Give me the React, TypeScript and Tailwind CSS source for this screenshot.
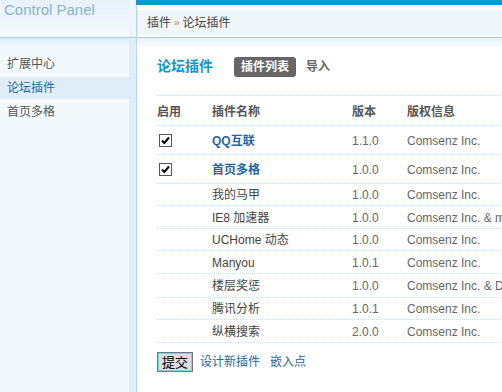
import React from 'react';

const navItems = [
  { label: '扩展中心', active: false },
  { label: '论坛插件', active: true },
  { label: '首页多格', active: false },
];

// row heights include the dotted bottom border
const plugins = [
  { name: 'QQ互联', version: '1.1.0', copyright: 'Comsenz Inc.', enabled: true, h: 'h-[29px]' },
  { name: '首页多格', version: '1.0.0', copyright: 'Comsenz Inc.', enabled: true, h: 'h-[29px]' },
  { name: '我的马甲', version: '1.0.0', copyright: 'Comsenz Inc.', enabled: false, h: 'h-[22px]' },
  { name: 'IE8 加速器', version: '1.0.0', copyright: 'Comsenz Inc. & monkeye', enabled: false, h: 'h-[23px]' },
  { name: 'UCHome 动态', version: '1.0.0', copyright: 'Comsenz Inc.', enabled: false, h: 'h-[22px]' },
  { name: 'Manyou', version: '1.0.1', copyright: 'Comsenz Inc.', enabled: false, h: 'h-[23px]' },
  { name: '楼层奖惩', version: '1.0.0', copyright: 'Comsenz Inc. & Discuz!', enabled: false, h: 'h-[24px]' },
  { name: '腾讯分析', version: '1.0.1', copyright: 'Comsenz Inc.', enabled: false, h: 'h-[22px]' },
  { name: '纵横搜索', version: '2.0.0', copyright: 'Comsenz Inc.', enabled: false, h: 'h-[23px]' },
];

const CheckBox = () => (
  <span className="flex w-[13px] h-[13px] items-center justify-center border border-[#555] bg-white">
    <svg width="11" height="11" viewBox="0 0 11 11">
      <path d="M2 5.5 L4.3 8 L9 2.5" fill="none" stroke="#000" strokeWidth="2" />
    </svg>
  </span>
);

const App = () => {
  return (
    <div
      className="flex w-[502px] h-[392px] overflow-hidden bg-white text-[12px] text-[#333]"
      style={{ fontFamily: '"Liberation Sans", "Noto Sans CJK SC", sans-serif' }}
    >
      {/* left column: logo + side menu */}
      <div className="flex w-[137px] shrink-0 border-r border-[#b9d4e2]">
        <div className="flex flex-col w-[130px]">
          <div className="h-[38px] border-b border-[#a9cddd] bg-gradient-to-b from-[#e6f2f9] to-[#f6fbfd]">
            <div className="pl-[4px] pt-[2px] text-[15px] leading-[15px] text-[#86b5cc]">Control Panel</div>
          </div>
          <div className="flex-1 bg-[#f2f9fd] bg-[linear-gradient(#dcedf6,#f2f9fd_10px)] pt-[15px] flex flex-col gap-[2px]">
            {navItems.map((item) => (
              <div
                key={item.label}
                className={`h-[22px] flex items-center pl-[7px] ${item.active ? 'bg-[#deedf8] text-[#2366a8]' : 'text-[#555]'}`}
              >
                {item.label}
              </div>
            ))}
          </div>
        </div>
        <div className="flex flex-col w-[7px]">
          <div className="h-[38px] border-b border-[#a9cddd] bg-[#eef6fb]" />
          <div className="flex-1 bg-[#deeef8]" />
        </div>
      </div>

      {/* main */}
      <div className="flex-1 flex flex-col min-w-0">
        <div className="h-[38px] border-b border-[#a9cddd] flex flex-col">
          <div className="h-[5px] bg-[#0a9acd] -ml-px" />
          <div className="mt-[5px] h-[25px] bg-[#f0f7fb] border-l border-[#d6e7f1] flex items-center pl-[9px] text-[#444]">
            插件 <span className="mx-[3px] text-[10px] text-[#c08a3a]">»</span>论坛插件
          </div>
        </div>

        <div className="flex-1 bg-[linear-gradient(#e8f3f9,#fff_12px)] pl-[20px]">
          <div className="flex items-center h-[37px] mt-[10px]">
            <span className="text-[14px] font-bold text-[#0a99cc] w-[77px]">论坛插件</span>
            <span className="h-[20px] px-[7px] flex items-center rounded-[3px] bg-[#666] text-white font-bold">插件列表</span>
            <span className="ml-[10px] font-bold text-[#666]">导入</span>
          </div>

          <div className="mt-[10px] w-[400px] border-t border-dotted border-[#cde2ee]">
            <div className="flex items-center h-[30px] pt-[2px] border-b border-dotted border-[#cde2ee] font-bold text-[#555]">
              <span className="w-[55px]">启用</span>
              <span className="w-[140px]">插件名称</span>
              <span className="w-[55px]">版本</span>
              <span>版权信息</span>
            </div>
            {plugins.map((p) => (
              <div key={p.name} className={`flex items-center pt-[1px] ${p.h} border-b border-dotted border-[#cde2ee]`}>
                <span className="w-[55px] pl-[2px]">{p.enabled && <CheckBox />}</span>
                <span className={`w-[140px] ${p.enabled ? 'font-bold text-[#2366a8]' : 'text-[#444]'}`}>{p.name}</span>
                <span className="w-[55px] text-[#666]">{p.version}</span>
                <span className="whitespace-nowrap text-[#666]">{p.copyright}</span>
              </div>
            ))}
          </div>

          <div className="flex items-center mt-[9px] gap-[7px]">
            <button className="w-[36px] h-[20px] bg-[#dedede] border border-[#777] shadow-[inset_0_0_0_1px_#6fd8f3] text-[13px] leading-none text-black">
              提交
            </button>
            <span className="text-[#2366a8]">设计新插件</span>
            <span className="ml-[3px] text-[#2366a8]">嵌入点</span>
          </div>
        </div>
      </div>
    </div>
  );
};

export default App;
